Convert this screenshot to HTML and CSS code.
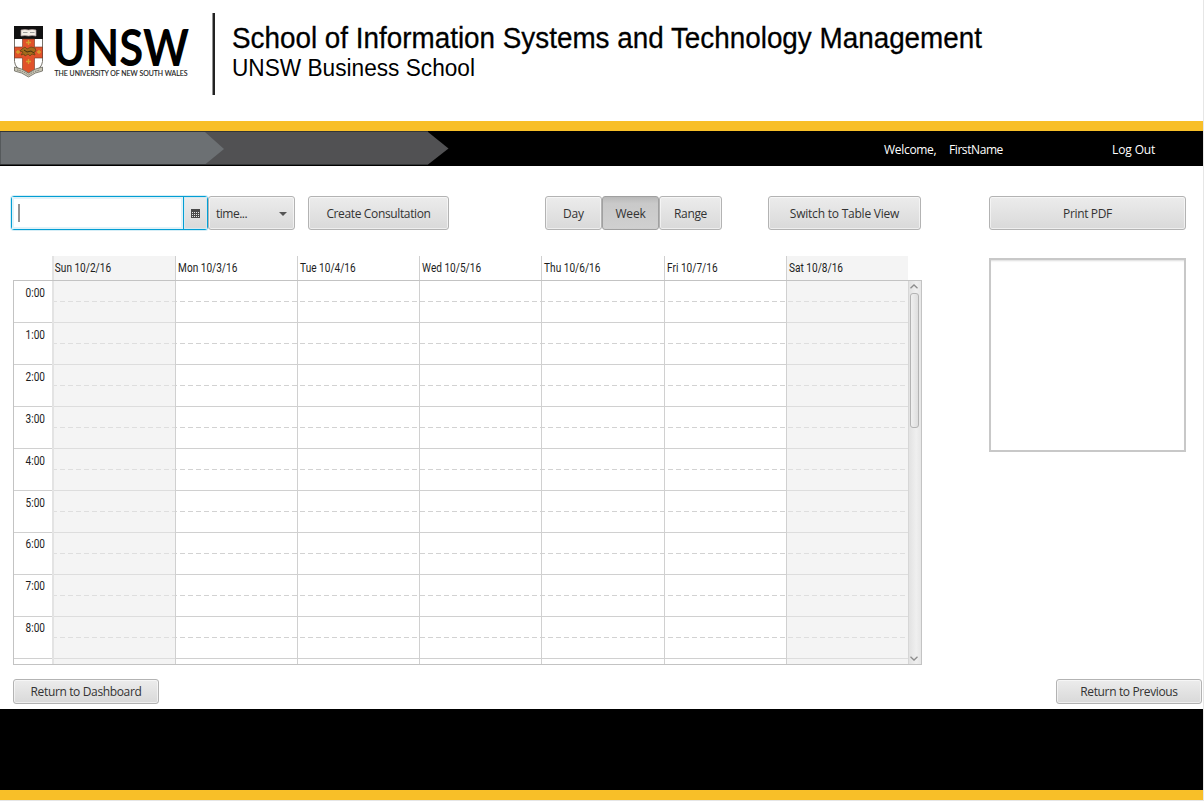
FILE: index.html
```html
<!DOCTYPE html>
<html lang="en">
<head>
<meta charset="utf-8">
<title>Consultations</title>
<link rel="stylesheet" href="styles.css">
</head>
<body>
<div class="app">
  <header class="banner">
    <svg class="banner-art" width="1203" height="121" viewBox="0 0 1203 121">
      <g class="crest">
        <path d="M14.500 26.500h28v35q0 7-14 13.500q-14-6.500-14-13.500z" fill="#fff" stroke="#77736a"/>
        <path d="M14 26h29v13h-29z" fill="#111"/>
        <path d="M21 30q4-1 7.500 0q3.500-1 7.500 0v6q-4-1-7.500 0q-3.500-1-7.500 0z" fill="#f4eee6" stroke="#a99" stroke-width=".7"/>
        <path d="M23 32.500h4.500M30 32.500h4.500" stroke="#777" stroke-width=".7"/>
        <path d="M22.500 39h12v8h8v11h-8v12.500l-6 3l-6-3V58h-8V47h8z" fill="#e0522a" stroke="#6d3422" stroke-width=".6"/>
        <g fill="none" stroke="#d6a02c" stroke-width="1.300"><path d="M26 42.500h5M28.500 40v5M26 61.500h5M28.500 59v5M16 52h4M18 50v4M37 52h4M39 50v4"/></g>
        <path d="M22 49l3-2 2 2 4-2 4 1 1 3-2 1 1 3-3-1-2 2-2-2-3 2-1-2-3 1 2-3-3-1z" fill="#a36b1c" stroke="#6a4515" stroke-width=".8"/>
        <path d="M24 50l3 2 4-1 3 2" fill="none" stroke="#39280e" stroke-width=".9"/>
        <path d="M14.500 67q7 1 14 6q7-5 14-6v4q-7 1-14 6q-7-5-14-6z" fill="#c9c6b6" stroke="#66645b" stroke-width=".8"/>
        <path d="M17 70q6 1 11.500 5q6-4 11.500-5" fill="none" stroke="#77756a" stroke-width="1" stroke-dasharray="1.500 1"/>
      </g>
      <text class="logo-name" x="53" y="65.500" textLength="136" lengthAdjust="spacingAndGlyphs">UNSW</text>
      <text class="logo-tag" x="54.500" y="75.500" textLength="133" lengthAdjust="spacingAndGlyphs">THE UNIVERSITY OF NEW SOUTH WALES</text>
      <path d="M212.500 13h2.500v82h-2.500z" fill="#222"/>
      <text class="title" x="232" y="48" textLength="750" lengthAdjust="spacingAndGlyphs">School of Information Systems and Technology Management</text>
      <text class="subtitle" x="232" y="76" textLength="243" lengthAdjust="spacingAndGlyphs">UNSW Business School</text>
    </svg>
  </header>
  <div class="stripe"></div>
  <nav class="nav">
    <svg class="crumbs" width="450" height="35" viewBox="0 0 450 35">
      <path d="M200 1h228l20.500 16.500L428 33.500H200z" fill="#515153"/>
      <path d="M0 1h205l19 17L205 33.500H0z" fill="#6c7073"/>
      <path d="M0 .5h428M0 33.500h428" stroke="#333536" fill="none"/>
      <path d="M.5 1v32" stroke="#55595b"/>
    </svg>
    <span class="welcome">Welcome,</span>
    <span class="user">FirstName</span>
    <a class="logout">Log Out</a>
  </nav>
  <div class="toolbar">
    <div class="datepicker">
      <div class="date-field"><i class="caret"></i></div>
      <div class="date-button">
        <svg width="9" height="9" viewBox="0 0 9 9"><path d="M0 0h9v9H0z" fill="#494949"/><path d="M1 3.500h7M1 5.500h7M1 7.500h7" stroke="#e5e5e5" stroke-dasharray="1 1"/></svg>
      </div>
    </div>
    <div class="btn time"><span>time...</span><svg width="8" height="4" viewBox="0 0 8 4"><path d="M0 0h8L4 4z" fill="#555"/></svg></div>
    <div class="btn create"><span>Create Consultation</span></div>
    <div class="segments">
      <div class="btn day-btn"><span>Day</span></div>
      <div class="btn week-btn active"><span>Week</span></div>
      <div class="btn range-btn"><span>Range</span></div>
    </div>
    <div class="btn switch"><span>Switch to Table View</span></div>
    <div class="btn print"><span>Print PDF</span></div>
  </div>
  <main class="content">
    <section class="calendar">
      <div class="days-head days">
        <div class="weekend"><span>Sun 10/2/16</span></div><div><span>Mon 10/3/16</span></div><div><span>Tue 10/4/16</span></div><div><span>Wed 10/5/16</span></div><div><span>Thu 10/6/16</span></div><div><span>Fri 10/7/16</span></div><div class="weekend"><span>Sat 10/8/16</span></div>
      </div>
      <div class="cal-body">
        <div class="rows">
          <div class="row"><span>0:00</span><i></i></div>
          <div class="row"><span>1:00</span><i></i></div>
          <div class="row"><span>2:00</span><i></i></div>
          <div class="row"><span>3:00</span><i></i></div>
          <div class="row"><span>4:00</span><i></i></div>
          <div class="row"><span>5:00</span><i></i></div>
          <div class="row late"><span>6:00</span><i></i></div>
          <div class="row late"><span>7:00</span><i></i></div>
          <div class="row late"><span>8:00</span><i></i></div>
        </div>
        <div class="days columns">
          <div class="weekend"></div><div></div><div></div><div></div><div></div><div></div><div class="weekend"></div>
        </div>
        <div class="scrollbar">
          <svg width="8" height="5" viewBox="0 0 8 5"><path d="M.5 4.200L4 1l3.500 3.200" fill="none" stroke="#8d8d8d" stroke-width="1.300"/></svg>
          <div class="thumb"></div>
          <svg class="down" width="8" height="5" viewBox="0 0 8 5"><path d="M.5 .8L4 4L7.500 .8" fill="none" stroke="#8d8d8d" stroke-width="1.300"/></svg>
        </div>
      </div>
    </section>
    <aside class="notes"></aside>
  </main>
  <div class="returns">
    <div class="btn"><span>Return to Dashboard</span></div>
    <div class="btn"><span>Return to Previous</span></div>
  </div>
  <footer class="footer"></footer>
  <div class="stripe"></div>
</div>
</body>
</html>
```
FILE: styles.css
```css
* { box-sizing: border-box; }
body {
  margin: 0;
  background: #e6e6e6;
  font-family: "Open Sans", "Noto Sans", sans-serif;
  font-size: 12px;
  color: #333;
  overflow: hidden;
}
.app { width: 1203px; height: 800px; background: #fff; display: flex; flex-direction: column; }
.banner { height: 121px; }
.banner-art { display: block; }
.logo-name { font: 700 52px Lato, sans-serif; fill: #000; }
.logo-tag { font: 7.5px Lato, sans-serif; fill: #222; stroke: #222; stroke-width: .15px; }
.title { font: 30px "Liberation Sans", Arial, sans-serif; fill: #000; stroke: #000; stroke-width: .3px; }
.subtitle { font: 23.5px "Liberation Sans", Arial, sans-serif; fill: #000; }
.stripe { height: 10px; background: #f8bf28; flex: none; }

.nav { height: 35px; background: #000; color: #fff; display: flex; line-height: 37px; }
.crumbs { display: block; width: 450px; margin-right: 434px; }
.welcome { width: 65px; letter-spacing: -.3px; }
.user { width: 163px; letter-spacing: -.42px; }
.logout { letter-spacing: -.12px; }

.toolbar { display: flex; height: 34px; margin: 30px 0 0 11px; }
.btn {
  display: flex;
  align-items: center;
  justify-content: center;
  border: 1px solid #b3b3b3;
  border-radius: 3px;
  background: linear-gradient(#ececec, #d9d9d9);
  box-shadow: inset 0 0 0 1px rgba(255, 255, 255, .55);
  white-space: nowrap;
  padding-top: 1px;
  letter-spacing: -.36px;
}
.datepicker {
  display: flex;
  width: 197px;
  border: 1px solid #039ed3;
  border-radius: 3px;
  box-shadow: 0 0 0 1px #d5eef7;
}
.date-field { width: 171px; box-shadow: inset 0 0 0 2px #e1f2f8; padding: 7px 0 0 6px; }
.caret { display: block; width: 2px; height: 18px; background: #949494; }
.date-button {
  flex: 1;
  display: flex;
  align-items: center;
  justify-content: center;
  padding-right: 1px;
  border-left: 1px solid #039ed3;
  background: linear-gradient(#ececec, #d9d9d9);
  box-shadow: inset 0 0 0 1px #d5e9f0;
}
.time { width: 87px; justify-content: space-between; padding-left: 7px; padding-right: 7px; }
.time span { letter-spacing: -.5px; }
.create { width: 141px; margin-left: 13px; }
.segments { display: flex; margin-left: 96px; }
.day-btn { width: 57px; letter-spacing: -.2px; }
.week-btn { width: 57px; letter-spacing: -.2px; }
.range-btn { width: 63px; }
.active {
  background: linear-gradient(#b9b9b9, #c9c9c9 20%, #d0d0d0);
  border-color: #a0a0a0;
  box-shadow: none;
}
.switch { width: 153px; margin-left: 46px; letter-spacing: -.22px; }
.print { width: 197px; margin-left: 68px; }

.content { display: flex; margin: 26px 0 0 13px; height: 409px; align-items: flex-start; }
.calendar { width: 909px; font-family: Roboto, sans-serif; color: #1c1c1c; }
.days { display: grid; grid-template-columns: 123px 122px 122px 122px 123px 122px 122px; width: 856px; }
.days > div { border-left: 1px solid #d0d0d0; }
.days-head { height: 24px; margin-left: 39px; line-height: 24px; }
.days-head span { display: inline-block; padding-left: 2.500px; transform: scaleX(.84); transform-origin: 0 50%; }
.days-head .weekend { background: #f4f4f4; }
.days > .weekend:first-child { border-left: 2px solid #e3e3e3; }
.days-head > .weekend:first-child span { padding-left: 1px; }
.cal-body {
  display: grid;
  grid-template-columns: 38px 856px 1fr;
  grid-template-rows: 383px;
  border: 1px solid #c3c3c3;
  overflow: hidden;
}
.rows { grid-area: 1 / 1 / 2 / 3; }
.row { height: 42px; border-bottom: 1px solid #d0d0d0; display: flex; align-items: flex-start; }
.row span { width: 38px; line-height: 24px; text-align: right; padding-right: 7px; transform: scaleX(.84); transform-origin: 31px 50%; }
.late span { line-height: 22px; }
.row i {
  width: 855px;
  height: 1px;
  margin-top: 20px;
  background: repeating-linear-gradient(90deg, #d2d2d2 0 5px, transparent 5px 8px);
}
.columns { grid-area: 1 / 2; }
.columns .weekend { background: rgba(234, 234, 234, .52); background-clip: padding-box; }
.scrollbar {
  grid-area: 1 / 3;
  border-left: 1px solid #d6d6d6;
  background: linear-gradient(90deg, #e2e2e2, #efefef 60%, #e6e6e6);
  display: flex;
  flex-direction: column;
  padding: 3px 0 3px 1px;
}
.scrollbar svg { display: block; flex: none; }
.thumb {
  width: 9px;
  height: 135px;
  margin-top: 4px;
  border: 1px solid #b3b3b3;
  border-radius: 3px;
  background: linear-gradient(90deg, #f0f0f0, #dedede);
}
.scrollbar .down { margin-top: auto; }
.notes {
  width: 197px;
  height: 194px;
  margin: 2px 0 0 67px;
  border: 2px solid #c8c8c8;
  box-shadow: inset 0 2px 2px -1px #ddd;
}

.returns { display: flex; justify-content: space-between; margin: 14px 1px 0 13px; height: 25px; }
.returns .btn { width: 146px; padding-top: 0; }
.footer { margin-top: 5px; height: 81px; background: #000; }
```
